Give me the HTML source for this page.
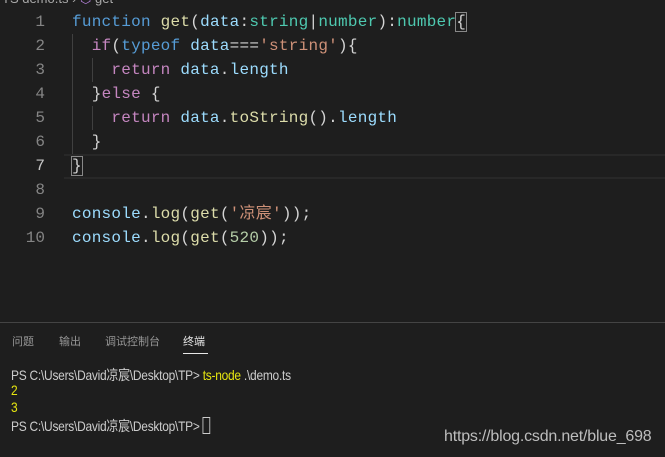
<!DOCTYPE html>
<html><head><meta charset="utf-8"><style>
body{margin:0;width:665px;height:457px;background:#1e1e1e;overflow:hidden;position:relative;font-family:"Liberation Mono","Noto Sans CJK SC",monospace;}
.bc{position:absolute;top:-9px;left:2px;font:13px "Liberation Sans",sans-serif;color:#a9a9a9;}
.ln{position:absolute;left:0;width:45px;text-align:right;font-size:16px;color:#858585;height:24px;line-height:24px;}
.code{position:absolute;left:72px;font-size:16px;letter-spacing:0.25px;height:24px;line-height:24px;white-space:pre;color:#d4d4d4;}
.k{color:#569cd6}.f{color:#dcdcaa}.v{color:#9cdcfe}.t{color:#4ec9b0}.s{color:#ce9178}.c{color:#c586c0}.n{color:#b5cea8}
.cur{position:absolute;left:64px;right:0;top:154px;height:21px;border-top:2px solid #282828;border-bottom:2px solid #282828;}
.guide{position:absolute;left:72px;width:1px;background:#404040;}
.sep{position:absolute;left:0;right:0;top:322px;height:1px;background:#444;}
.tab{position:absolute;top:333px;font:11px "Liberation Sans","Noto Sans CJK SC",sans-serif;color:#969696;}
.term{position:absolute;left:11px;font:14px "Liberation Sans","Noto Sans CJK SC",sans-serif;color:#cccccc;white-space:pre;letter-spacing:-0.3px;transform:scaleX(0.855);transform-origin:0 0;}
.y{color:#e5e510}
.wm{position:absolute;left:444px;top:428px;font:16px "Liberation Sans",sans-serif;color:#bdbdbd;letter-spacing:-0.2px;}
</style></head><body>
<div class="bc">TS demo.ts › <span style="color:#b180d7">⬡</span> get</div>
<div class="cur"></div>
<div class="guide" style="top:34px;height:120px"></div>
<div class="guide" style="left:92px;top:58px;height:24px"></div>
<div class="guide" style="left:92px;top:106px;height:24px"></div>

<div class="ln" style="top:10px">1</div>
<div class="ln" style="top:34px">2</div>
<div class="ln" style="top:58px">3</div>
<div class="ln" style="top:82px">4</div>
<div class="ln" style="top:106px">5</div>
<div class="ln" style="top:130px">6</div>
<div class="ln" style="top:154px;color:#c6c6c6">7</div>
<div class="ln" style="top:178px">8</div>
<div class="ln" style="top:202px">9</div>
<div class="ln" style="top:226px">10</div>

<div class="code" style="top:10px"><span class="k">function</span> <span class="f">get</span>(<span class="v">data</span>:<span class="t">string</span>|<span class="t">number</span>):<span class="t">number</span><span style="outline:1px solid #888">{</span></div>
<div class="code" style="top:34px">  <span class="c">if</span>(<span class="k">typeof</span> <span class="v">data</span>===<span class="s">'string'</span>){</div>
<div class="code" style="top:58px">    <span class="c">return</span> <span class="v">data</span>.<span class="v">length</span></div>
<div class="code" style="top:82px">  }<span class="c">else</span> {</div>
<div class="code" style="top:106px">    <span class="c">return</span> <span class="v">data</span>.<span class="f">toString</span>().<span class="v">length</span></div>
<div class="code" style="top:130px">  }</div>
<div class="code" style="top:154px"><span style="outline:1px solid #888">}</span></div>
<div class="code" style="top:202px"><span class="v">console</span>.<span class="f">log</span>(<span class="f">get</span>(<span class="s">'凉宸'</span>));</div>
<div class="code" style="top:226px"><span class="v">console</span>.<span class="f">log</span>(<span class="f">get</span>(<span class="n">520</span>));</div>

<div class="sep"></div>
<div class="tab" style="left:12px">问题</div>
<div class="tab" style="left:59px">输出</div>
<div class="tab" style="left:105px">调试控制台</div>
<div class="tab" style="left:183px;color:#e7e7e7">终端</div>
<div style="position:absolute;left:183px;top:353px;width:25px;height:1px;background:#e7e7e7"></div>

<div class="term" style="top:365px">PS C:\Users\David凉宸\Desktop\TP&gt; <span class="y">ts-node</span> .\demo.ts</div>
<div class="term y" style="top:382px">2</div>
<div class="term y" style="top:399px">3</div>
<div class="term" style="top:416px">PS C:\Users\David凉宸\Desktop\TP&gt; <span style="display:inline-block;width:7px;height:15px;border:1px solid #ccc;vertical-align:-3px"></span></div>
<div class="wm">https://blog.csdn.net/blue_698</div>
</body></html>
